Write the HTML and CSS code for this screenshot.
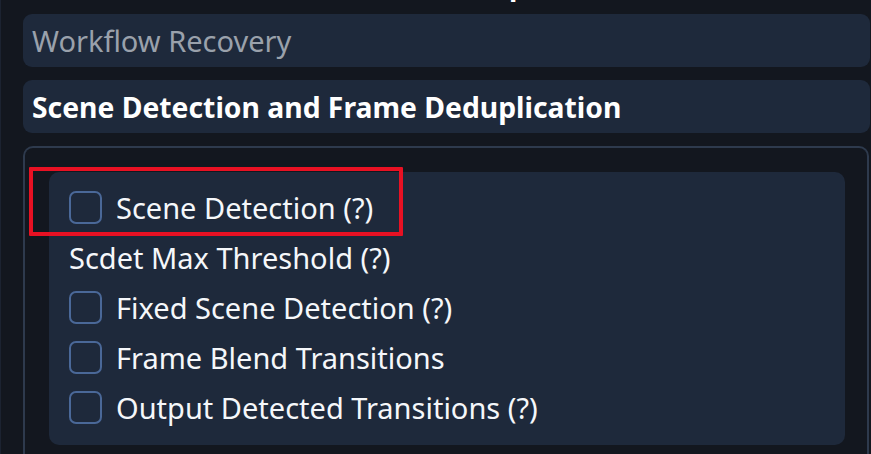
FILE: index.html
```html
<!DOCTYPE html>
<html>
<head>
<meta charset="utf-8">
<link rel="stylesheet" href="styles.css">
</head>
<body>
<div class="frame">
  <div class="cut-title"><span>p</span></div>
  <div class="bar muted">Workflow Recovery</div>
  <div class="bar strong">Scene Detection and Frame Deduplication</div>
  <div class="group">
    <div class="panel">
      <label class="row"><span class="box"></span><span class="lbl">Scene Detection (?)</span></label>
      <div class="row plain">Scdet Max Threshold (?)</div>
      <label class="row"><span class="box"></span><span class="lbl">Fixed Scene Detection (?)</span></label>
      <label class="row"><span class="box"></span><span class="lbl">Frame Blend Transitions</span></label>
      <label class="row"><span class="box"></span><span class="lbl">Output Detected Transitions (?)</span></label>
    </div>
    <div class="highlight"></div>
  </div>
</div>
</body>
</html>
```
FILE: styles.css
```css
html, body {
  margin: 0;
  padding: 0;
  background: #13171f;
  overflow: hidden;
}
body {
  font-family: "Noto Sans", "Open Sans", sans-serif;
  color: #f1f5f9;
}
.frame {
  border-left: 1px solid #1c2331;
  padding: 0 1px 0 22px;
  height: 454px;
  box-sizing: border-box;
}
.cut-title {
  display: flow-root;
  height: 14px;
  overflow: visible;
}
.cut-title span {
  display: block;
  margin-top: -30px;
  padding-left: 486px;
  font-size: 28px;
  line-height: 28px;
  font-weight: 700;
  color: #ffffff;
}
.bar {
  height: 53px;
  background: #1e293b;
  border-radius: 9px;
  display: flex;
  align-items: center;
  padding-left: 9px;
  font-size: 29px;
  margin-bottom: 13px;
}
.bar.muted {
  color: #9aa1ab;
}
.bar.strong {
  font-weight: 700;
  font-size: 28.3px;
  color: #ffffff;
}
.group {
  position: relative;
  border: 2px solid #2e3a4d;
  border-bottom: none;
  border-radius: 10px 10px 0 0;
  margin-right: 1px;
  padding: 24px 22px 20px 24px;
}
.panel {
  background: #1e293b;
  border-radius: 10px;
  padding: 10px 20px 12px 20px;
  height: 273px;
  box-sizing: border-box;
}
.row {
  height: 50px;
  display: flex;
  align-items: center;
  font-size: 29px;
  color: #f5f7fa;
}
.box {
  width: 33px;
  height: 33px;
  box-sizing: border-box;
  border: 2px solid #4a6898;
  border-radius: 7px;
  margin-right: 14px;
  flex: none;
}
.highlight {
  position: absolute;
  left: 4px;
  top: 19px;
  width: 374px;
  height: 69px;
  box-sizing: border-box;
  border: 4px solid #e81123;
  border-radius: 1px;
}
```
